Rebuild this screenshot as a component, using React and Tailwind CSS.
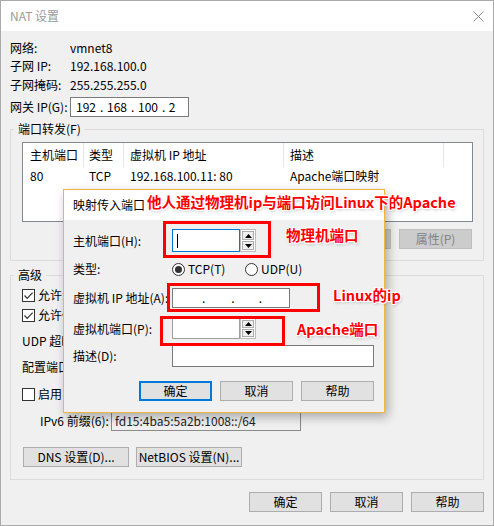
import React from "react";

const Btn = ({ children, w = "w-[73px]", variant = "normal" }) => {
  const styles = {
    normal: "border border-[#adadad] bg-[#e1e1e1] text-black",
    disabled: "border border-[#bfbfbf] bg-[#cccccc] text-[#838383]",
    def: "border-2 border-[#0078d7] bg-[#e1e1e1] text-black",
  };
  return (
    <div
      className={`${w} h-[20px] shrink-0 flex items-center justify-center text-[12px] leading-none whitespace-nowrap ${styles[variant]}`}
    >
      {children}
    </div>
  );
};

const Check = ({ checked }) => (
  <div className="w-[13px] h-[13px] shrink-0 border border-[#333333] bg-white flex items-center justify-center">
    {checked && (
      <svg width="11" height="11" viewBox="0 0 11 11">
        <path d="M1.5 5.5 L4.2 8.3 L9.6 2.6" fill="none" stroke="#333333" strokeWidth="1.2" />
      </svg>
    )}
  </div>
);

const Radio = ({ checked }) => (
  <div className="w-[13px] h-[13px] shrink-0 rounded-full border border-[#333333] bg-white flex items-center justify-center">
    {checked && <div className="w-[7px] h-[7px] rounded-full bg-[#333333]" />}
  </div>
);

const Spin = () => (
  <div className="w-[16px] h-full flex flex-col gap-px border border-[#bdbdbd] bg-white p-px">
    <div className="flex-1 flex items-center justify-center border border-[#adadad] bg-[#efefef]">
      <svg width="7" height="4" viewBox="0 0 7 4">
        <path d="M3.5 0 L7 4 L0 4Z" fill="#000" />
      </svg>
    </div>
    <div className="flex-1 flex items-center justify-center border border-[#adadad] bg-[#efefef]">
      <svg width="7" height="4" viewBox="0 0 7 4">
        <path d="M0 0 L7 0 L3.5 4Z" fill="#000" />
      </svg>
    </div>
  </div>
);

const Annot = ({ children, className }) => (
  <div
    className={`absolute whitespace-nowrap font-bold text-[14.5px] leading-[20px] text-[#ff0000] [text-shadow:-1px_-1px_0_#fff,1px_-1px_0_#fff,-1px_1px_0_#fff,1px_1px_0_#fff,0_0_3px_#fff,1px_2px_3px_rgba(0,0,0,0.25)] ${className}`}
  >
    {children}
  </div>
);

export default function App() {
  return (
    <div className="relative w-[494px] h-[526px] overflow-hidden font-['Noto_Sans_CJK_SC','Noto_Sans',sans-serif] text-[12px] leading-[16px] text-black">
      {/* Main window */}
      <div className="w-[494px] h-[526px] border border-[#aaaaaa] bg-[#f0f0f0] flex flex-col">
        <div className="h-[30px] shrink-0 bg-white flex items-center justify-between pl-[9px] pr-[9px]">
          <span className="text-[12px] text-[#9b9b9b]">NAT 设置</span>
          <svg width="11" height="11" viewBox="0 0 11 11">
            <path d="M0.5 0.5 L10.5 10.5 M10.5 0.5 L0.5 10.5" stroke="#8a8a8a" strokeWidth="1" />
          </svg>
        </div>

        <div className="flex-1 flex flex-col px-[9px] pt-[8px]">
          <div className="flex h-[18px] items-center">
            <span className="w-[60px] shrink-0 whitespace-nowrap">网络:</span>
            <span>vmnet8</span>
          </div>
          <div className="flex h-[18px] items-center">
            <span className="w-[60px] shrink-0 whitespace-nowrap">子网 IP:</span>
            <span>192.168.100.0</span>
          </div>
          <div className="flex h-[19px] items-center">
            <span className="w-[60px] shrink-0 whitespace-nowrap">子网掩码:</span>
            <span>255.255.255.0</span>
          </div>
          <div className="flex h-[20px] items-center mt-[3px]">
            <span className="w-[60px] shrink-0 whitespace-nowrap">网关 IP(G):</span>
            <div className="w-[119px] h-[20px] border border-[#7a7a7a] bg-white flex items-center pl-[1px]">
              <span className="w-[28px] text-center">192</span>
              <span className="w-[3px] text-center">.</span>
              <span className="w-[28px] text-center">168</span>
              <span className="w-[3px] text-center">.</span>
              <span className="w-[28px] text-center">100</span>
              <span className="w-[3px] text-center">.</span>
              <span className="w-[14px] text-center">2</span>
            </div>
          </div>

          {/* Port forwarding group */}
          <fieldset className="mt-[4px] border border-[#dcdcdc] pb-[11px] min-w-0">
            <legend className="ml-[3px] px-[4px] text-[12px] leading-[16px]">端口转发(F)</legend>
            <div className="ml-[11px] mt-[5px] w-[451px] h-[80px] border border-[#828790] bg-white">
              <div className="flex h-[24px]">
                <div className="w-[61px] pl-[7px] flex items-center border-r border-[#e5e5e5]">主机端口</div>
                <div className="w-[40px] pl-[5px] flex items-center border-r border-[#e5e5e5]">类型</div>
                <div className="w-[160px] pl-[6px] flex items-center border-r border-[#e5e5e5]">虚拟机 IP 地址</div>
                <div className="w-[160px] pl-[6px] flex items-center border-r border-[#e5e5e5]">描述</div>
              </div>
              <div className="flex h-[18px] items-center">
                <div className="w-[61px] pl-[7px]">80</div>
                <div className="w-[40px] pl-[5px]">TCP</div>
                <div className="w-[160px] pl-[6px]">192.168.100.11: 80</div>
                <div className="w-[160px] pl-[6px]">Apache端口映射</div>
              </div>
            </div>
            <div className="mt-[7px] flex justify-end gap-[8px] pr-[11px]">
              <Btn>添加(A)...</Btn>
              <Btn variant="disabled">移除(R)</Btn>
              <Btn variant="disabled">属性(P)</Btn>
            </div>
          </fieldset>

          {/* Advanced group */}
          <fieldset className="mt-[6px] border border-[#dcdcdc] pb-[12px] min-w-0">
            <legend className="ml-[3px] px-[4px] text-[12px] leading-[16px]">高级</legend>
            <div className="flex flex-col pt-[2px] px-[11px]">
              <div className="flex h-[20px] items-center gap-[3px]">
                <Check checked />
                <span>允许活动的 FTP(T)</span>
              </div>
              <div className="flex h-[20px] items-center gap-[3px]">
                <Check checked />
                <span>允许任何组织唯一标识符(O)</span>
              </div>
              <div className="flex h-[20px] items-center mt-[6px]">
                <span className="w-[150px] shrink-0">UDP 超时(以秒为单位)(U):</span>
                <div className="w-[84px] h-[20px] border border-[#7a7a7a] bg-white pl-[3px]">30</div>
              </div>
              <div className="flex h-[20px] items-center mt-[6px]">
                <span className="w-[150px] shrink-0">配置端口(C):</span>
                <div className="w-[84px] h-[20px] border border-[#7a7a7a] bg-white pl-[3px]">0</div>
              </div>
              <div className="flex h-[20px] items-center gap-[3px] mt-[7px]">
                <Check />
                <span>启用 IPv6(E)</span>
              </div>
              <div className="flex h-[21px] items-center mt-[6px] pl-[18px]">
                <span className="w-[71px] shrink-0 whitespace-nowrap">IPv6 前缀(6):</span>
                <div className="w-[190px] h-[21px] border border-[#8a8a8a] bg-[#f0f0f0] flex items-center pl-[3px] text-[#222]">
                  fd15:4ba5:5a2b:1008::/64
                </div>
              </div>
              <div className="flex mt-[16px] gap-[7px] pl-[1px]">
                <Btn w="w-[106px]">DNS 设置(D)...</Btn>
                <Btn w="w-[106px]">NetBIOS 设置(N)...</Btn>
              </div>
            </div>
          </fieldset>

          <div className="mt-[12px] flex justify-end gap-[8px]">
            <Btn>确定</Btn>
            <Btn>取消</Btn>
            <Btn>帮助</Btn>
          </div>
        </div>
      </div>

      {/* Mapping dialog */}
      <div className="absolute left-[63px] top-[189px] w-[322px] h-[224px] border border-[#f0b63e] bg-[#f0f0f0] shadow-[3px_4px_10px_rgba(0,0,0,0.3)] flex flex-col">
        <div className="h-[30px] shrink-0 bg-white flex items-center pl-[9px]">映射传入端口</div>
        <div className="flex-1 flex flex-col pl-[9px] pr-[10px] pt-[9px]">
          <div className="flex items-center h-[23px]">
            <span className="w-[99px] shrink-0 whitespace-nowrap">主机端口(H):</span>
            <div className="flex h-[23px]">
              <div className="w-[68px] h-full border border-[#0078d7] bg-white flex items-center pl-[4px]">
                <div className="w-px h-[14px] bg-black" />
              </div>
              <Spin />
            </div>
          </div>
          <div className="flex items-center h-[20px] mt-[7px]">
            <span className="w-[99px] shrink-0 whitespace-nowrap">类型:</span>
            <div className="w-[73px] flex items-center gap-[3px]">
              <Radio checked />
              <span>TCP(T)</span>
            </div>
            <div className="flex items-center gap-[3px]">
              <Radio />
              <span>UDP(U)</span>
            </div>
          </div>
          <div className="flex items-center h-[20px] mt-[9px]">
            <span className="w-[99px] shrink-0 whitespace-nowrap">虚拟机 IP 地址(A):</span>
            <div className="w-[118px] h-[20px] border border-[#7a7a7a] bg-white flex items-center leading-none">
              <span className="ml-[29px]">.</span>
              <span className="ml-[26px]">.</span>
              <span className="ml-[24px]">.</span>
            </div>
          </div>
          <div className="flex items-center h-[21px] mt-[10px]">
            <span className="w-[99px] shrink-0 whitespace-nowrap">虚拟机端口(P):</span>
            <div className="flex h-[21px]">
              <div className="w-[68px] h-full border border-[#a0a0a0] bg-white" />
              <Spin />
            </div>
          </div>
          <div className="flex items-center h-[22px] mt-[6px]">
            <span className="w-[99px] shrink-0 whitespace-nowrap">描述(D):</span>
            <div className="w-[202px] h-[22px] border border-[#7a7a7a] bg-white" />
          </div>
          <div className="mt-[14px] flex justify-end gap-[8px]">
            <Btn variant="def">确定</Btn>
            <Btn>取消</Btn>
            <Btn>帮助</Btn>
          </div>
        </div>
      </div>

      {/* Annotations */}
      <Annot className="left-[147px] top-[192px]">他人通过物理机ip与端口访问Linux下的Apache</Annot>
      <div className="absolute left-[163px] top-[221px] w-[108px] h-[37px] border-[3px] border-[#ff0000]" />
      <Annot className="left-[286px] top-[225px]">物理机端口</Annot>
      <div className="absolute left-[167px] top-[283px] w-[153px] h-[29px] border-[3px] border-[#ff0000]" />
      <Annot className="left-[333px] top-[285px]">Linux的ip</Annot>
      <div className="absolute left-[160px] top-[316px] w-[125px] h-[30px] border-[3px] border-[#ff0000]" />
      <Annot className="left-[297px] top-[319px]">Apache端口</Annot>
    </div>
  );
}
